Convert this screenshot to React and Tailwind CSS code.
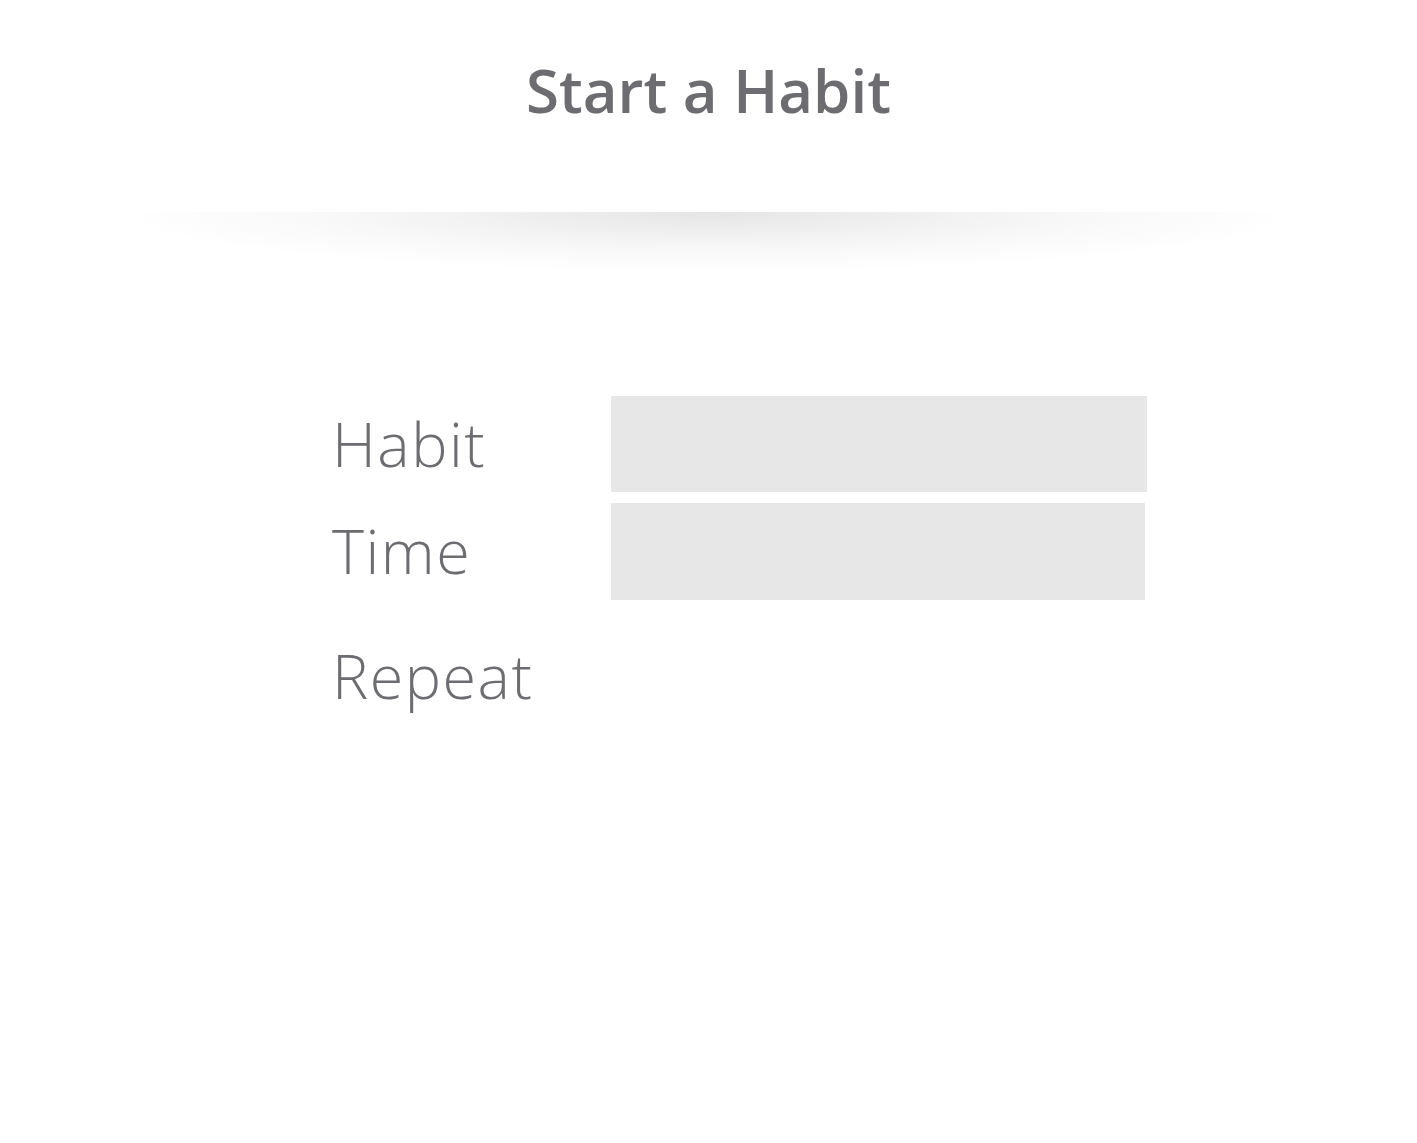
import React from 'react';

export default function App() {
    return (
        <div className="min-h-screen bg-white font-['Open_Sans',sans-serif]">
            <header className="h-[212px] pt-[60px] text-center">
                <h1 className="text-[60px] font-semibold leading-none text-[#6d6d71]">Start a Habit</h1>
            </header>
            <div className="mx-auto h-[60px] w-[1180px] bg-[radial-gradient(ellipse_50%_100%_at_50%_0%,rgba(0,0,0,0.1),rgba(0,0,0,0.03)_60%,transparent_100%)]" />

            <div className="ml-[332px] mt-[124px] flex flex-col">
                <div className="flex items-start">
                    <div className="w-[279px] text-[61px] font-light leading-[96px] tracking-[1.5px] text-[#6d6d71]">Habit</div>
                    <div className="h-[96px] w-[536px] bg-[#e7e7e7]" />
                </div>
                <div className="mt-[11px] flex items-start">
                    <div className="w-[279px] text-[61px] font-light leading-[96px] tracking-[1.5px] text-[#6d6d71]">Time</div>
                    <div className="h-[97px] w-[534px] bg-[#e7e7e7]" />
                </div>
                <div className="mt-[28px] flex items-start">
                    <div className="w-[279px] text-[61px] font-light leading-[96px] tracking-[1.5px] text-[#6d6d71]">Repeat</div>
                </div>
            </div>
        </div>
    );
}
